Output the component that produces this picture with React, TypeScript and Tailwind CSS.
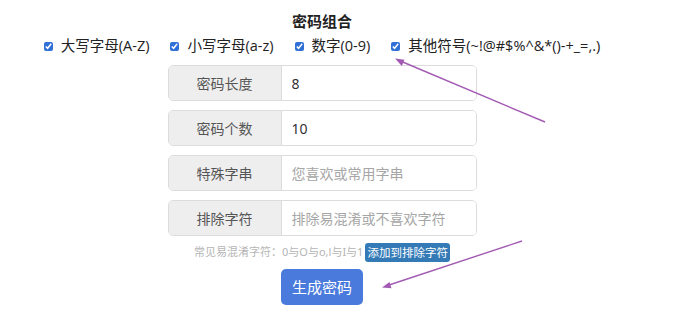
import React from "react";

const font = { fontFamily: '"Noto Sans", "Noto Sans CJK SC", sans-serif' };
const wide = { fontFamily: '"Open Sans", "Noto Sans CJK SC", sans-serif' };

function Check({ label }: { label: string }) {
  return (
    <label className="flex items-center gap-[8px] text-[14.5px] text-[#222] leading-none whitespace-nowrap" style={wide}>
      <input type="checkbox" defaultChecked className="w-[9px] h-[9px] m-0 accent-[#2f6fd6]" />
      <span>{label}</span>
    </label>
  );
}

function Group({ label, value, placeholder }: { label: string; value?: string; placeholder?: string }) {
  return (
    <div className="flex w-[309px] h-[36px] border border-[#dcdcdc] rounded-[5px] overflow-hidden text-[14px]">
      <div className="w-[113px] shrink-0 bg-[#eeeeee] border-r border-[#dcdcdc] flex items-center justify-center text-[#555]">
        {label}
      </div>
      <input
        className="flex-1 min-w-0 px-[10px] outline-none bg-white text-[#333] placeholder:text-[#a6a6a6]"
        defaultValue={value}
        placeholder={placeholder}
        style={font}
      />
    </div>
  );
}

export default function App() {
  return (
    <div className="relative w-[692px] h-[314px] bg-white overflow-hidden" style={font}>
      <div className="w-[644px] flex flex-col items-center">
        <div className="mt-[11px] text-[15px] font-bold text-[#222] leading-[20px]">密码组合</div>
        <div className="mt-[7px] flex items-center gap-[21px] h-[16px]">
          <Check label="大写字母(A-Z)" />
          <Check label="小写字母(a-z)" />
          <Check label="数字(0-9)" />
          <Check label="其他符号(~!@#$%^&*()-+_=,.)" />
        </div>
        <div className="mt-[11px] flex flex-col gap-[9px]">
          <Group label="密码长度" value="8" />
          <Group label="密码个数" value="10" />
          <Group label="特殊字串" placeholder="您喜欢或常用字串" />
          <Group label="排除字符" placeholder="排除易混淆或不喜欢字符" />
        </div>
        <div className="mt-[7px] flex items-center gap-[2px] h-[19px]">
          <span className="text-[11px] text-[#b5b5b5]">常见易混淆字符：0与O与o,l与I与1</span>
          <button className="h-[19px] px-[2px] bg-[#337ab7] text-white text-[11.5px] rounded-[3px] leading-none" style={font}>
            添加到排除字符
          </button>
        </div>
        <button
          className="mt-[7px] w-[82px] h-[36px] bg-[#4a7bdc] text-white text-[15px] rounded-[5px]"
          style={font}
        >
          生成密码
        </button>
      </div>
      <svg className="absolute inset-0 pointer-events-none" width="692" height="314">
        <g stroke="#a35ab3" strokeWidth="1.4" fill="#a35ab3">
          <line x1="545" y1="122" x2="398" y2="60" />
          <polygon points="395,58.5 404.5,59.8 401.8,66" stroke="none" />
          <line x1="522" y1="241" x2="386" y2="286" />
          <polygon points="382,287.5 389.5,282 391.5,288.3" stroke="none" />
        </g>
      </svg>
    </div>
  );
}
